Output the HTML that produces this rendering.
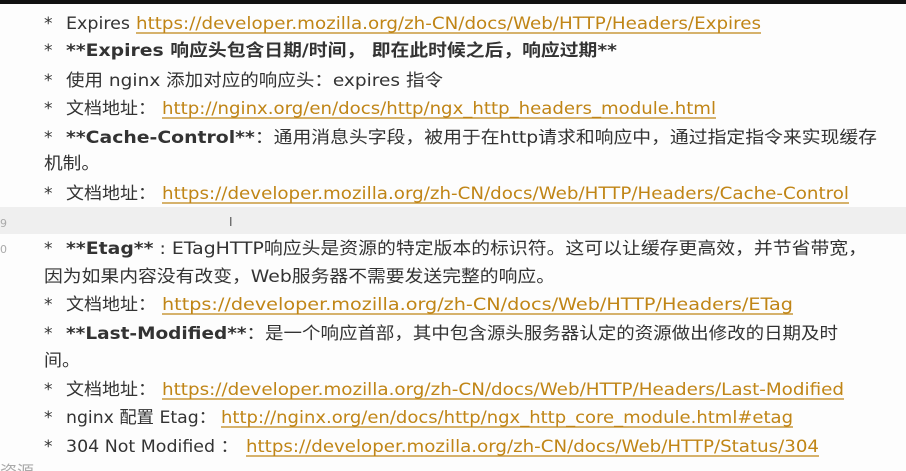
<!DOCTYPE html>
<html><head><meta charset="utf-8"><style>
html,body{margin:0;padding:0;background:#fdfdfd;width:906px;height:471px;overflow:hidden}
svg{display:block}
text{font-family:"DejaVu Sans","Noto Sans CJK SC",sans-serif;font-size:17px;fill:#333}
.l{fill:#c08516}
.b{font-weight:bold}
.s{fill:#444;font-size:15px}
</style></head><body>
<svg width="906" height="471" viewBox="0 0 906 471">
<rect x="0" y="0" width="906" height="4" fill="#111"/>
<rect x="0" y="207" width="906" height="27" fill="#efefef"/>
<text x="0" y="227" style="font-size:11px;fill:#aaa">9</text>
<text x="0" y="253" style="font-size:11px;fill:#aaa">0</text>
<text x="229" y="226" style="font-size:12px;fill:#555">I</text>
<g class="s">
<text x="44" y="29">*</text><text x="44" y="56">*</text><text x="44" y="86">*</text><text x="44" y="114">*</text><text x="44" y="143">*</text><text x="44" y="199">*</text><text x="44" y="254">*</text><text x="44" y="310">*</text><text x="44" y="339">*</text><text x="44" y="395">*</text><text x="44" y="423">*</text><text x="44" y="452">*</text>
</g>
<text x="66" y="29" textLength="64" lengthAdjust="spacingAndGlyphs">Expires</text>
<text class="l" x="136" y="29" textLength="625" lengthAdjust="spacingAndGlyphs">https://developer.mozilla.org/zh-CN/docs/Web/HTTP/Headers/Expires</text>
<text class="b" x="66" y="56" textLength="551" lengthAdjust="spacingAndGlyphs">**Expires 响应头包含日期/时间， 即在此时候之后，响应过期**</text>
<text x="66" y="86" textLength="377" lengthAdjust="spacingAndGlyphs">使用 nginx 添加对应的响应头：expires 指令</text>
<text x="66" y="114" textLength="90" lengthAdjust="spacingAndGlyphs">文档地址：</text>
<text class="l" x="162" y="114" textLength="554" lengthAdjust="spacingAndGlyphs">http://nginx.org/en/docs/http/ngx_http_headers_module.html</text>
<text x="66" y="143" textLength="811" lengthAdjust="spacingAndGlyphs"><tspan class="b">**Cache-Control**</tspan>：通用消息头字段，被用于在http请求和响应中，通过指定指令来实现缓存</text>
<text x="44" y="169" textLength="56" lengthAdjust="spacingAndGlyphs">机制。</text>
<text x="66" y="199" textLength="90" lengthAdjust="spacingAndGlyphs">文档地址：</text>
<text class="l" x="162" y="199" textLength="687" lengthAdjust="spacingAndGlyphs">https://developer.mozilla.org/zh-CN/docs/Web/HTTP/Headers/Cache-Control</text>
<text x="66" y="254" textLength="801" lengthAdjust="spacingAndGlyphs"><tspan class="b">**Etag**</tspan> : ETagHTTP响应头是资源的特定版本的标识符。这可以让缓存更高效，并节省带宽，</text>
<text x="44" y="282" textLength="511" lengthAdjust="spacingAndGlyphs">因为如果内容没有改变，Web服务器不需要发送完整的响应。</text>
<text x="66" y="310" textLength="90" lengthAdjust="spacingAndGlyphs">文档地址：</text>
<text class="l" x="162" y="310" textLength="631" lengthAdjust="spacingAndGlyphs">https://developer.mozilla.org/zh-CN/docs/Web/HTTP/Headers/ETag</text>
<text x="66" y="339" textLength="772" lengthAdjust="spacingAndGlyphs"><tspan class="b">**Last-Modified**</tspan>：是一个响应首部，其中包含源头服务器认定的资源做出修改的日期及时</text>
<text x="44" y="366" textLength="36" lengthAdjust="spacingAndGlyphs">间。</text>
<text x="66" y="395" textLength="90" lengthAdjust="spacingAndGlyphs">文档地址：</text>
<text class="l" x="162" y="395" textLength="682" lengthAdjust="spacingAndGlyphs">https://developer.mozilla.org/zh-CN/docs/Web/HTTP/Headers/Last-Modified</text>
<text x="66" y="423" textLength="150" lengthAdjust="spacingAndGlyphs">nginx 配置 Etag：</text>
<text class="l" x="221" y="423" textLength="572" lengthAdjust="spacingAndGlyphs">http://nginx.org/en/docs/http/ngx_http_core_module.html#etag</text>
<text x="66" y="452" textLength="172" lengthAdjust="spacingAndGlyphs">304 Not Modified ：</text>
<text class="l" x="246" y="452" textLength="573" lengthAdjust="spacingAndGlyphs">https://developer.mozilla.org/zh-CN/docs/Web/HTTP/Status/304</text>
<text x="0" y="478" style="fill:#aaa">资源</text>
<g stroke="#c08516" stroke-width="1.3">
<line x1="136" y1="33" x2="761" y2="33"/>
<line x1="162" y1="118" x2="716" y2="118"/>
<line x1="162" y1="203" x2="849" y2="203"/>
<line x1="162" y1="314" x2="793" y2="314"/>
<line x1="162" y1="399" x2="844" y2="399"/>
<line x1="221" y1="427" x2="793" y2="427"/>
<line x1="246" y1="456" x2="819" y2="456"/>
</g>
</svg>
</body></html>
